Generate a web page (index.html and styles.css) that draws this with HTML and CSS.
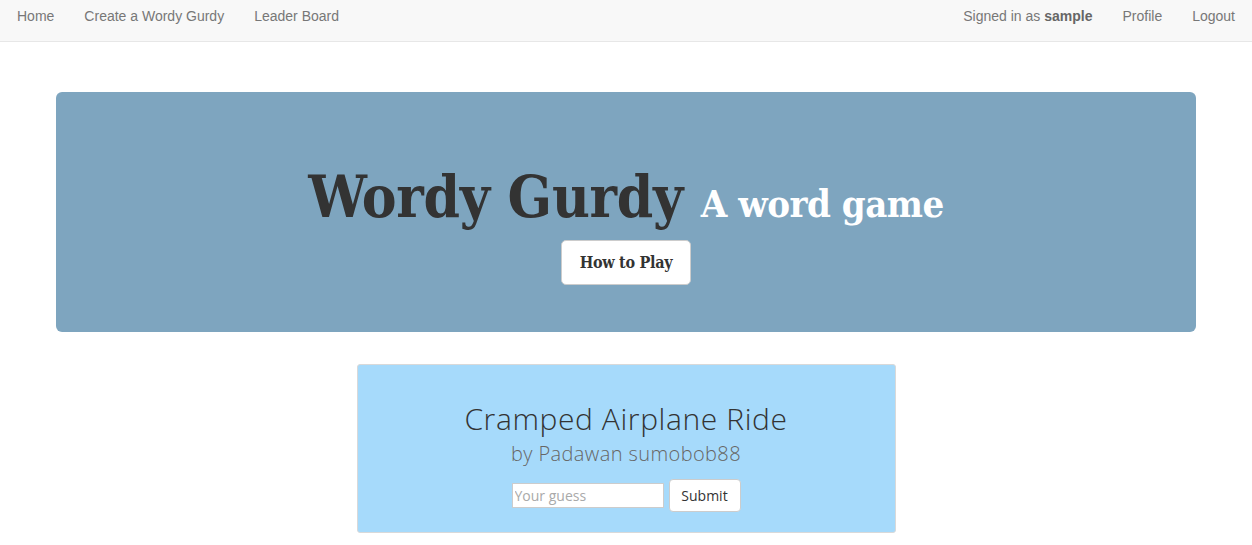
FILE: index.html
```html
<!DOCTYPE html>
<html>
<head>
<meta charset="utf-8">
<link rel="stylesheet" href="styles.css">
</head>
<body>
<nav class="navbar">
  <ul class="nav">
    <li><a href="#">Home</a></li>
    <li><a href="#">Create a Wordy Gurdy</a></li>
    <li><a href="#">Leader Board</a></li>
  </ul>
  <ul class="nav">
    <li><span class="signed">Signed in as <b>sample</b></span></li>
    <li><a href="#">Profile</a></li>
    <li><a href="#">Logout</a></li>
  </ul>
</nav>
<main class="container">
  <section class="jumbotron">
    <h1 class="title">Wordy Gurdy <small>A word game</small></h1>
    <button class="btn-play">How to Play</button>
  </section>
  <section class="card">
    <h2 class="puzzle">Cramped Airplane Ride</h2>
    <p class="author">by Padawan sumobob88</p>
    <form class="guess">
      <input type="text" placeholder="Your guess">
      <button type="button" class="btn-submit">Submit</button>
    </form>
  </section>
</main>
</body>
</html>
```

FILE: styles.css
```css
* { box-sizing: border-box; }
html, body { margin: 0; padding: 0; }
body {
  font-family: "Liberation Sans", Arial, sans-serif;
  font-size: 14px;
  color: #333;
  background: #fff;
}
.navbar {
  height: 42px;
  background: #f8f8f8;
  border-bottom: 1px solid #e7e7e7;
  display: flex;
  justify-content: space-between;
  padding: 0 2px;
}
.nav {
  list-style: none;
  margin: 0;
  padding: 0;
  display: flex;
}
.nav li a, .nav li .signed {
  display: block;
  padding: 8px 15px;
  line-height: 17px;
  color: #777;
  text-decoration: none;
  font-size: 14px;
}
.nav li .signed b { color: #666; }
.container {
  width: 1140px;
  margin: 50px auto 0;
}
.jumbotron {
  background: #7ea5bf;
  border-radius: 6px;
  height: 240px;
  display: flex;
  flex-direction: column;
  align-items: center;
  padding-top: 70px;
}
.title {
  margin: 0;
  font-family: "DejaVu Serif Condensed", "DejaVu Serif", serif;
  font-weight: bold;
  font-size: 58px;
  line-height: 70px;
  color: #333;
  letter-spacing: -0.3px;
}
.title small {
  font-size: 38px;
  color: #fff;
  letter-spacing: -0.5px;
}
.btn-play {
  margin-top: 1px;
  width: 130px;
  height: 45px;
  background: #fff;
  border: 1px solid #ccc;
  border-radius: 5px;
  font-family: "DejaVu Serif Condensed", "DejaVu Serif", serif;
  font-weight: bold;
  font-size: 16px;
  color: #333;
  letter-spacing: -0.3px;
}
.card {
  width: 539px;
  margin: 32px auto 0;
  height: 169px;
  background: #a6dafb;
  border: 1px solid #d9d9d9;
  border-radius: 3px;
  display: flex;
  flex-direction: column;
  align-items: center;
  padding-top: 36px;
}
.puzzle {
  margin: 0;
  font-family: "Open Sans", sans-serif;
  font-weight: 300;
  font-size: 30px;
  line-height: 36px;
  color: #333;
  letter-spacing: 0.6px;
}
.author {
  margin: 4px 0 0;
  font-family: "Open Sans", sans-serif;
  font-weight: 300;
  font-size: 20px;
  line-height: 26px;
  color: #666;
  letter-spacing: 0.4px;
}
.guess {
  margin-top: 12px;
  display: flex;
  align-items: center;
  gap: 5px;
}
.guess input {
  width: 152px;
  height: 25px;
  border: 1px solid #ccc;
  padding: 0 2px;
  font-family: "Open Sans", sans-serif;
  font-size: 14px;
  background: #fff;
  outline: none;
}
.guess input::placeholder { color: #a9a9a9; }
.btn-submit {
  width: 72px;
  height: 33px;
  background: #fff;
  border: 1px solid #ccc;
  border-radius: 4px;
  font-family: "Open Sans", sans-serif;
  font-size: 14px;
  color: #333;
}
```
